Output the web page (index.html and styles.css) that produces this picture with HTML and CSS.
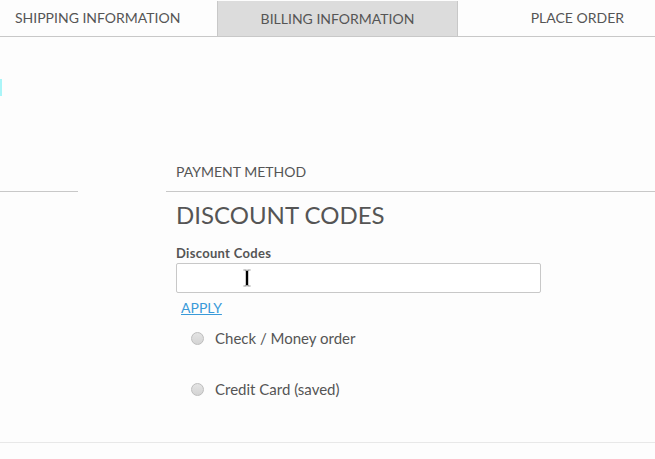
FILE: index.html
```html
<!DOCTYPE html>
<html>
<head>
<meta charset="utf-8">
<link rel="stylesheet" href="styles.css">
</head>
<body>
<nav class="tabs">
  <div class="tab tab-first">SHIPPING INFORMATION</div>
  <div class="tab tab-active">BILLING INFORMATION</div>
  <div class="tab tab-last">PLACE ORDER</div>
</nav>
<main class="main">
  <aside class="side">
    <div class="side-mark"></div>
    <div class="side-rule"></div>
  </aside>
  <section class="payment">
    <div class="payment-title">PAYMENT METHOD</div>
    <div class="payment-body">
      <h2 class="discount-title">DISCOUNT CODES</h2>
      <label class="field-label">Discount Codes</label>
      <div class="field">
        <div class="input"></div>
        <svg class="cursor" width="9" height="18" viewBox="0 0 9 18">
          <path d="M0.5 0.5h3v1h1v-1h3v1h-2v15h2v1h-3v-1h-1v1h-3v-1h2v-15h-2z" fill="#000" stroke="#fff" stroke-width="0.6"/>
        </svg>
      </div>
      <a class="apply" href="#">APPLY</a>
      <div class="methods">
        <div class="method"><span class="radio"></span><span class="method-label">Check / Money order</span></div>
        <div class="method"><span class="radio"></span><span class="method-label">Credit Card (saved)</span></div>
      </div>
    </div>
  </section>
</main>
<div class="footer-rule"></div>
</body>
</html>
```
FILE: styles.css
```css
html, body {
  margin: 0;
  padding: 0;
  background: #fdfdfd;
  font-family: Lato, "Open Sans", sans-serif;
  color: #555;
}
.tabs {
  display: flex;
  height: 36px;
  border-bottom: 1px solid #c8c8c8;
}
.tab {
  font-size: 14px;
  line-height: 36px;
  color: #555;
}
.tab-first {
  width: 202px;
  padding-left: 15px;
}
.tab-active {
  width: 241px;
  margin-top: 1px;
  line-height: 35px;
  background: #dcdcdc;
  border-left: 1px solid #c8c8c8;
  border-right: 1px solid #c8c8c8;
  text-align: center;
  box-sizing: border-box;
}
.tab-last {
  flex: 1;
  text-align: right;
  padding-right: 31px;
}
.main {
  display: grid;
  grid-template-columns: 78px 1fr;
  column-gap: 88px;
}
.side {
  padding-top: 42px;
}
.side-mark {
  width: 2px;
  height: 17px;
  background: #aaf5f8;
}
.side-rule {
  margin-top: 95px;
  height: 1px;
  background: #c8c8c8;
}
.payment {
  padding-top: 126px;
}
.payment-title {
  font-size: 14px;
  padding-left: 10px;
  line-height: 18px;
  padding-bottom: 10px;
  border-bottom: 1px solid #c8c8c8;
  color: #555;
}
.payment-body {
  padding-left: 10px;
}
.discount-title {
  margin: 9px 0 0;
  font-size: 24px;
  font-weight: 400;
  line-height: 28px;
  color: #555;
}
.field-label {
  display: block;
  margin-top: 16px;
  font-size: 13px;
  font-weight: 700;
  line-height: 16px;
  letter-spacing: 0.3px;
  color: #555;
}
.field {
  position: relative;
  width: 365px;
  margin-top: 2px;
}
.input {
  height: 28px;
  border: 1px solid #c8c8c8;
  border-radius: 2px;
  background: #fff;
}
.cursor {
  position: absolute;
  left: 67px;
  top: 6px;
}
.apply {
  display: inline-block;
  margin-top: 6px;
  margin-left: 5px;
  font-size: 14px;
  line-height: 18px;
  color: #3a9ad9;
  text-decoration: underline;
}
.methods {
  display: flex;
  flex-direction: column;
  gap: 33px;
  margin-top: 12px;
  padding-left: 15px;
}
.method {
  display: flex;
  align-items: center;
  gap: 11px;
  height: 18px;
}
.radio {
  width: 11px;
  height: 11px;
  border-radius: 50%;
  border: 1px solid #bdbdbd;
  background: linear-gradient(#e4e4e4, #d4d4d4);
}
.method-label {
  font-size: 15px;
  color: #555;
}
.footer-rule {
  margin-top: 44px;
  height: 1px;
  background: #e8e8e8;
}
```
